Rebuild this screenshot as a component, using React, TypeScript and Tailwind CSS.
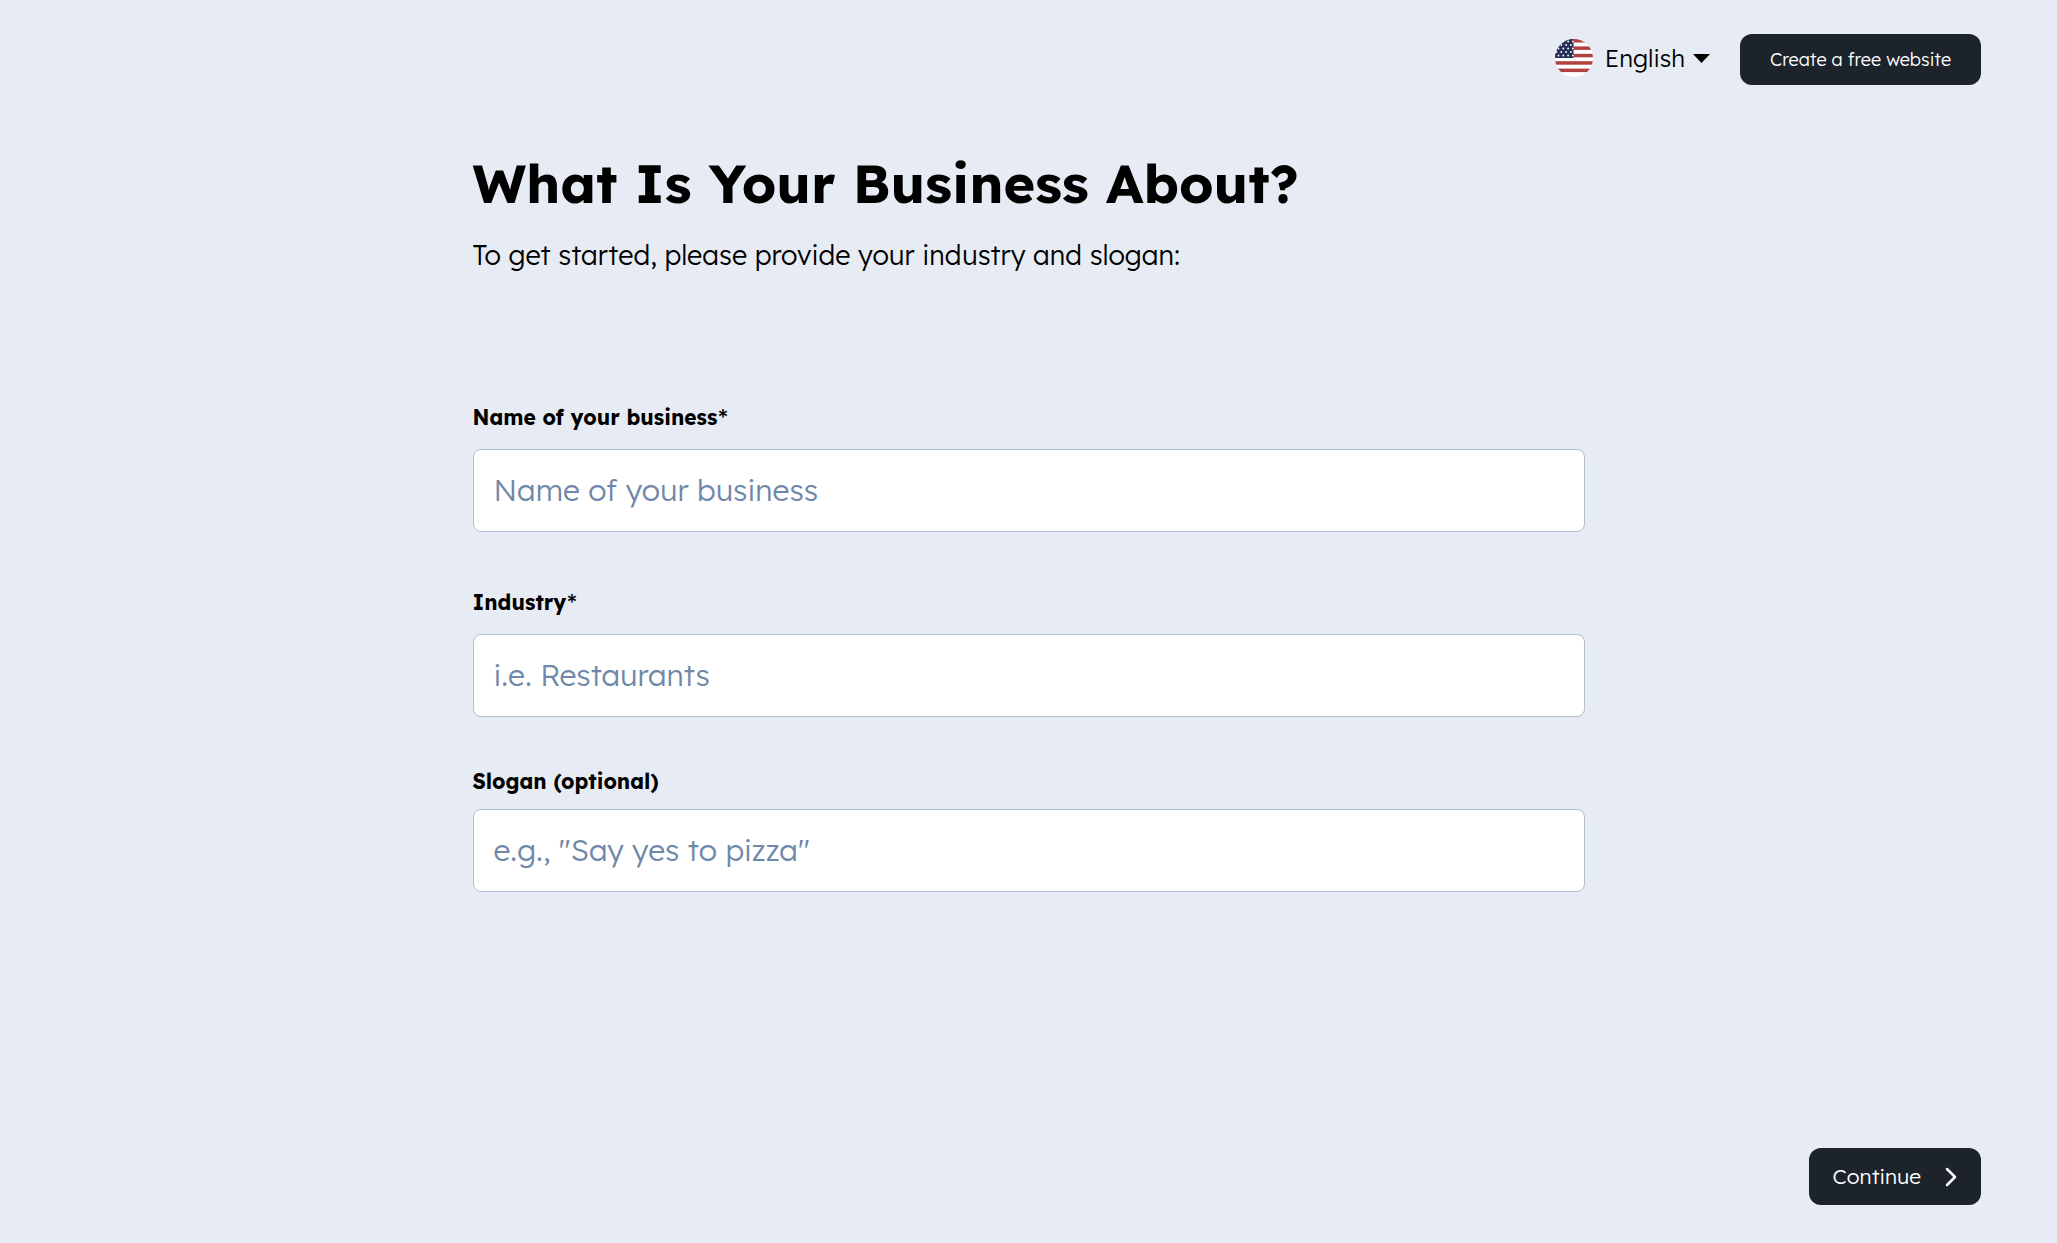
import { useState } from 'react'
import type { FormEvent } from 'react'

interface FieldProps {
  id: string
  label: string
  placeholder: string
  value: string
  required?: boolean
  onChange: (value: string) => void
}

export default function App() {
  const [name, setName] = useState('')
  const [industry, setIndustry] = useState('')
  const [slogan, setSlogan] = useState('')

  const handleSubmit = (e: FormEvent) => {
    e.preventDefault()
  }

  return (
    <div className="flex min-h-screen flex-col bg-[#e7ecf4] font-['Lexend','Inter','Liberation_Sans',sans-serif] font-light text-black">
      <header className="flex items-start justify-end gap-[30px] px-19 pt-[34px]">
        <button type="button" aria-haspopup="listbox" className="flex h-12 items-center gap-3 text-2xl">
          <FlagIcon />
          <span className="flex items-center gap-2">
            English
            <svg width="17" height="9" viewBox="0 0 17 9" aria-hidden="true">
              <path d="M0 0h17L8.5 9z" fill="currentColor" />
            </svg>
          </span>
        </button>
        <button type="button" className="h-[51px] rounded-xl bg-[#1c232b] px-[30px] text-lg text-white">
          Create a free website
        </button>
      </header>

      <main className="mx-auto mt-[66px] w-full max-w-[1112px]">
        <h1 className="text-[54px] leading-16 font-bold">What Is Your Business About?</h1>
        <p className="mt-5 text-[27px] leading-10">To get started, please provide your industry and slogan:</p>

        <form id="business-form" onSubmit={handleSubmit} className="mt-32 flex flex-col gap-14">
          <Field
            id="name"
            label="Name of your business"
            placeholder="Name of your business"
            value={name}
            required
            onChange={setName}
          />
          <div className="flex flex-col gap-[50px]">
            <Field
              id="industry"
              label="Industry"
              placeholder="i.e. Restaurants"
              value={industry}
              required
              onChange={setIndustry}
            />
            <Field
              id="slogan"
              label="Slogan (optional)"
              placeholder={'e.g., "Say yes to pizza"'}
              value={slogan}
              onChange={setSlogan}
            />
          </div>
        </form>
      </main>

      <footer className="mt-auto flex justify-end px-19 pb-[38px]">
        <button
          type="submit"
          form="business-form"
          className="flex h-[57px] items-center gap-6 rounded-xl bg-[#1c232b] px-6 text-[21px] text-white"
        >
          Continue
          <svg width="12" height="20" viewBox="0 0 12 20" fill="none" aria-hidden="true">
            <path d="M2 2l8 8-8 8" stroke="currentColor" strokeWidth="2.5" strokeLinecap="round" strokeLinejoin="round" />
          </svg>
        </button>
      </footer>
    </div>
  )
}

function Field({ id, label, placeholder, value, required, onChange }: FieldProps) {
  return (
    <div className={required ? 'flex flex-col gap-[17px]' : 'flex flex-col gap-[14px]'}>
      <label htmlFor={id} className="text-[21px] leading-7 font-bold">
        {label}
        {required && <span className="font-['Inter'] font-medium">*</span>}
      </label>
      <input
        id={id}
        type="text"
        value={value}
        onChange={(e) => onChange(e.target.value)}
        placeholder={placeholder}
        className="h-[83px] w-full rounded-lg border border-[#b0bfd2] bg-white px-5 pb-0.5 text-[30px] placeholder:text-[#6f88a9]"
      />
    </div>
  )
}

function FlagIcon() {
  const stripes = [0, 1, 2, 3, 4]
  const starRows = [0, 1, 2, 3, 4]
  return (
    <svg width="38" height="38" viewBox="0 0 38 38" aria-hidden="true">
      <clipPath id="flag-circle">
        <circle cx="19" cy="19" r="19" />
      </clipPath>
      <g clipPath="url(#flag-circle)">
        <rect width="38" height="38" fill="#fff" />
        {stripes.map((i) => (
          <rect key={i} y={i * 7.4} width="38" height="3.5" fill="#b0413e" />
        ))}
        <rect width="18.5" height="19" fill="#26305c" />
        {starRows.map((row) =>
          [0, 1, 2, 3].map((col) => (
            <circle
              key={`${row}-${col}`}
              cx={3.5 + col * 4.8 - (row % 2 === 0 ? 0 : 2)}
              cy={2.5 + row * 3.5}
              r="0.9"
              fill="#fff"
            />
          ))
        )}
      </g>
    </svg>
  )
}
